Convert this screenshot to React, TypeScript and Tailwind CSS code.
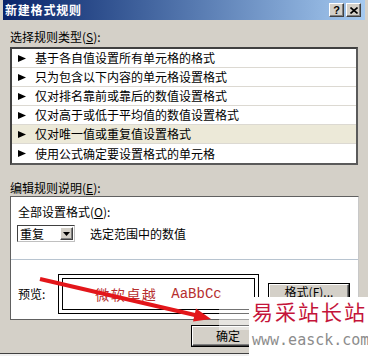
import React from "react";

const rules = [
  "基于各自值设置所有单元格的格式",
  "只为包含以下内容的单元格设置格式",
  "仅对排名靠前或靠后的数值设置格式",
  "仅对高于或低于平均值的数值设置格式",
  "仅对唯一值或重复值设置格式",
  "使用公式确定要设置格式的单元格",
];

const raised =
  "border border-t-white border-l-white border-r-[#404040] border-b-[#404040] shadow-[inset_-1px_-1px_0_#808080] bg-[#d4d0c8]";

const Triangle = () => (
  <svg width="8" height="7" viewBox="0 0 8 7" className="shrink-0">
    <polygon points="0,0 8,3.5 0,7" fill="#000" />
  </svg>
);

const App = () => {
  const selected = 4;

  return (
    <div className="relative w-[368px] h-[356px] overflow-hidden bg-[#d4d0c8] font-['Noto_Sans_CJK_SC',sans-serif] text-[12px] leading-[14px] text-black">
      <div className="h-[354px] border-b border-[#404040] flex flex-col">
        {/* title bar */}
        <div className="mx-[3px] h-[20px] flex items-center justify-between bg-linear-to-r from-[#0a246a] to-[#a6caf0] pl-[2px] pr-[4px]">
          <span className="text-white font-bold tracking-[0.8px]">新建格式规则</span>
          <div className="flex gap-[2px]">
            <div className={`${raised} w-[15px] h-[14px] flex items-center justify-center text-[11px] font-bold leading-none font-['Liberation_Sans',sans-serif]`}>
              ?
            </div>
            <div className={`${raised} w-[15px] h-[14px] flex items-center justify-center`}>
              <svg width="8" height="7" viewBox="0 0 8 7">
                <path d="M0.5 0.5 L7.5 6.5 M7.5 0.5 L0.5 6.5" stroke="#000" strokeWidth="1.6" />
              </svg>
            </div>
          </div>
        </div>

        <div className="pl-[10px] pr-[9px] flex flex-col">
          <div className="mt-[10px] h-[14px]">
            选择规则类型(<span className="underline">S</span>):
          </div>

          {/* rule type list */}
          <div className="mt-[3px] mr-[1px] border-2 border-t-[#404040] border-l-[#404040] border-r-[#5a5a5a] border-b-[#5a5a5a] bg-white">
            {rules.map((r, i) => (
              <div
                key={r}
                className={`h-[19px] flex items-center gap-[9px] pl-[6px] border-b border-[#dcd9d2] last:border-b-0 ${
                  i === selected ? "bg-[#ece9d8]" : ""
                }`}
              >
                <Triangle />
                <span>{r}</span>
              </div>
            ))}
          </div>

          <div className="mt-[16px] h-[14px]">
            编辑规则说明(<span className="underline">E</span>):
          </div>

          {/* description panel */}
          <div className="mt-[1px] border border-t-[#606060] border-l-[#606060] border-r-[#c8c8c8] border-b-[#606060] bg-white flex flex-col">
            <div className="pt-[8px] pb-[17px] px-[6px] flex flex-col">
              <div className="ml-[1px] h-[14px]">
                全部设置格式(<span className="underline">O</span>):
              </div>
              <div className="mt-[6px] flex items-center">
                <div className="w-[58px] h-[17px] border border-t-[#404040] border-l-[#404040] border-r-[#c0c0c0] border-b-[#c0c0c0] flex items-center justify-between pl-[2px] pr-[1px]">
                  <span>重复</span>
                  <div className={`${raised} w-[13px] h-[13px] flex items-center justify-center`}>
                    <svg width="7" height="4" viewBox="0 0 7 4">
                      <polygon points="0,0 7,0 3.5,4" fill="#000" />
                    </svg>
                  </div>
                </div>
                <span className="ml-[15px]">选定范围中的数值</span>
              </div>
            </div>
            <div className="border-t border-[#b8c4d0]" />
            <div className="pt-[14px] pb-[5px] px-[7px] flex items-center">
              <span className="w-[40px] shrink-0">预览:</span>
              <div className="w-[201px] h-[40px] border border-black p-[3px] bg-white shrink-0">
                <div className="h-full border border-black flex items-center justify-center gap-[14px] text-[#b62f2f]">
                  <span className="text-[14px] tracking-[1.5px]">微软卓越</span>
                  <span className="text-[14px] font-['Liberation_Mono',monospace]">AaBbCc</span>
                </div>
              </div>
              <div className={`${raised} ml-[10px] -mt-[4px] w-[80px] h-[17px] flex items-center justify-center outline outline-1 outline-black`}>
                格式(<span className="underline">F</span>)...
              </div>
            </div>
          </div>

          {/* buttons */}
          <div className="mt-[6px] flex pl-[182px]">
            <div className={`${raised} w-[72px] h-[20px] flex items-center justify-center outline outline-1 outline-black`}>
              确定
            </div>
          </div>
        </div>
      </div>
      <div className="h-[2px] bg-[#f0f0f0]" />

      {/* red arrow annotation */}
      <svg className="absolute left-0 top-0 pointer-events-none" width="368" height="356">
        <line x1="40" y1="279" x2="197" y2="315.5" stroke="#e3161a" strokeWidth="4" />
        <polygon points="211,319 193,321.5 196,308.5" fill="#e3161a" />
      </svg>

      {/* watermark */}
      <div className="absolute left-[219px] top-[296px] w-[30px] h-[34px] bg-white/45" />
      <div className="absolute left-[249px] top-[297px] w-[119px] h-[59px] bg-white flex flex-col pl-[3px]">
        <span className="mt-[3px] text-[21px] leading-[23px] tracking-[2px] text-[#c4143a] whitespace-nowrap">
          易采站长站
        </span>
        <span className="mt-[9px] text-[15px] leading-[16px] text-[#8c8c8c] font-['DejaVu_Sans_Mono',monospace] whitespace-nowrap">
          www.easck.com
        </span>
      </div>
    </div>
  );
};

export default App;
